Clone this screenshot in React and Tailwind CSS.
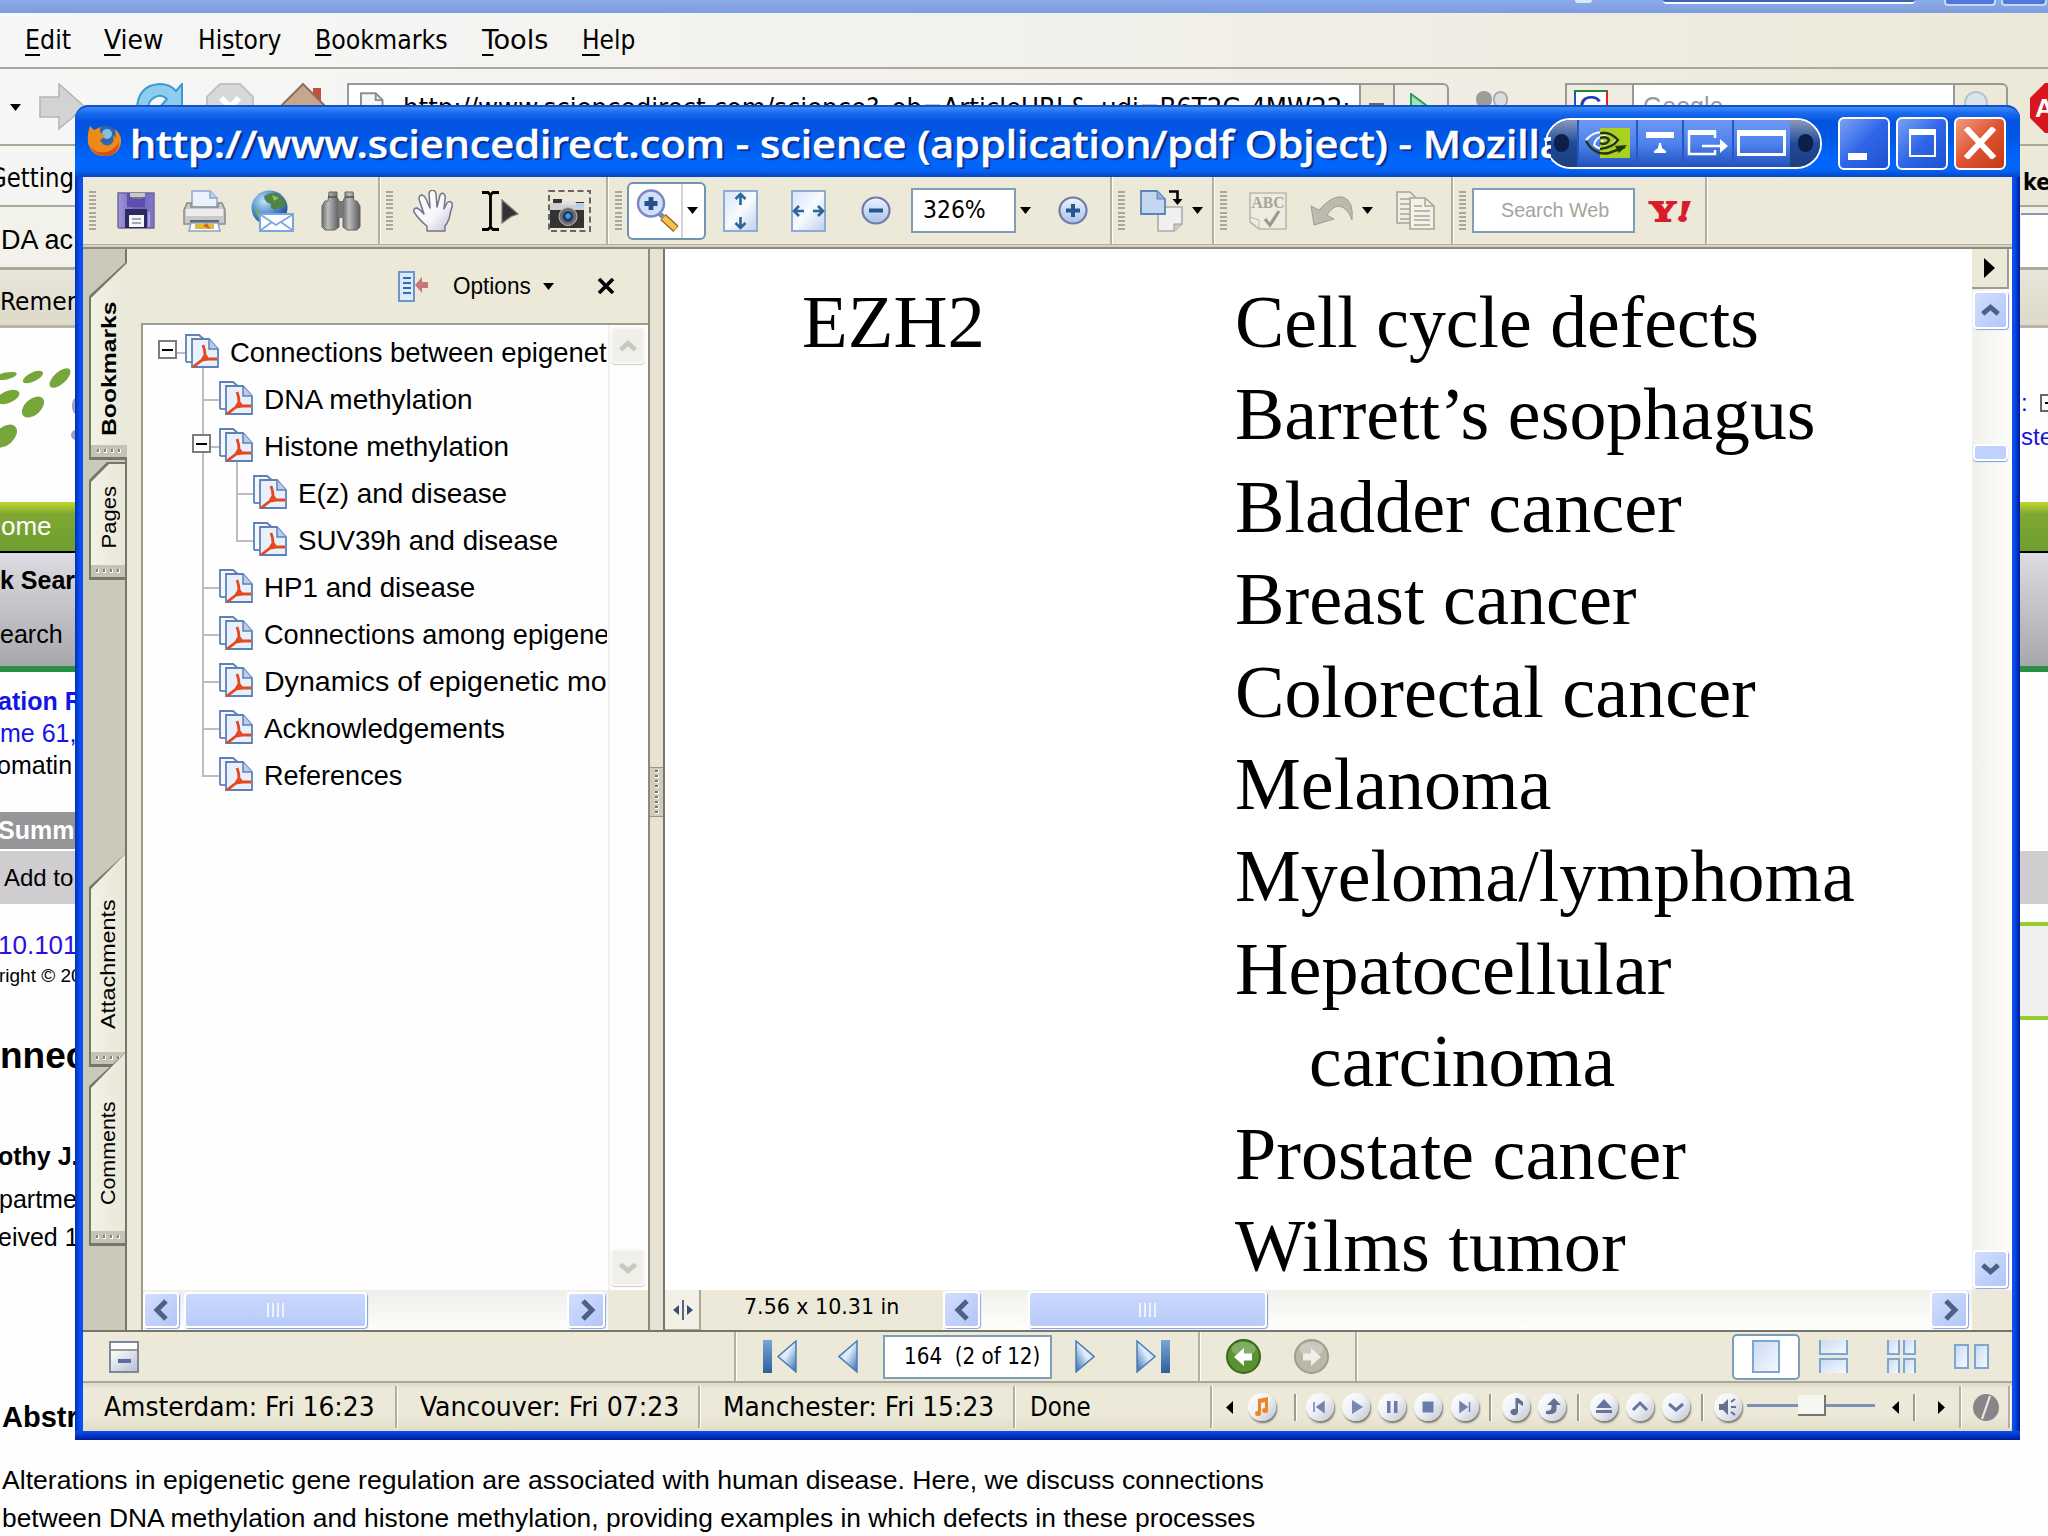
import { useLayoutEffect, useRef } from "react";

/* Text squeezed or stretched horizontally to an exact width. */
function Fit({ w, className = "", children }) {
  const ref = useRef(null);
  useLayoutEffect(() => {
    const el = ref.current;
    el.style.transform = "none";
    const n = el.offsetWidth;
    if (n) el.style.transform = `scaleX(${w / n})`;
  }, [w]);
  return (
    <span className={`block shrink-0 whitespace-pre ${className}`} style={{ width: w }}>
      <span ref={ref} className="inline-block origin-left">{children}</span>
    </span>
  );
}

const tahoma = "font-['DejaVu_Sans_Condensed','DejaVu_Sans',sans-serif]";
const arial = "font-['Liberation_Sans',sans-serif]";

const Down = ({ className = "" }) => (
  <svg className={`shrink-0 ${className}`} width="11" height="7" viewBox="0 0 11 7"><path d="M0 0H11L5.5 7Z" fill="#000" /></svg>
);

function Grip({ className = "" }) {
  return (
    <div className={`flex h-[40px] w-[7px] shrink-0 flex-col justify-between ${className}`}>
      {Array.from({ length: 10 }, (_, i) => <div key={i} className="h-[2px] bg-[#a9a796]" />)}
    </div>
  );
}
const Sep = ({ className = "" }) => <div className={`h-full w-[3px] shrink-0 border-l-[2px] border-r border-l-[#b3b09f] border-r-white ${className}`} />;

/* ---------- toolbar icons ---------- */
const Save = ({ className }) => (
  <svg className={className} width="38" height="37" viewBox="0 0 38 37">
    <defs><linearGradient id="sv" x1="0" x2="1"><stop offset="0" stopColor="#a397d6" /><stop offset=".5" stopColor="#6f60bd" /><stop offset="1" stopColor="#8377c6" /></linearGradient></defs>
    <path d="M1 1H37V36H2L1 35Z" fill="url(#sv)" stroke="#6a6599" strokeWidth="1.4" />
    <path d="M10 1H28V15H10Z" fill="#5d4fb0" /><path d="M13 1H28V5H13Z" fill="#c9c9c4" /><path d="M15 5H26V7H15Z" fill="#77758c" />
    <path d="M8 17H30V36H8Z" fill="#2d2a63" /><path d="M12 23H27V35H12Z" fill="#f6f6f8" /><path d="M15 27H24M15 31H24" stroke="#8d8c98" strokeWidth="1.5" />
    <path d="M32 20V35" stroke="#ada2e2" strokeWidth="2" />
  </svg>
);
const Print = ({ className }) => (
  <svg className={className} width="43" height="42" viewBox="0 0 43 42">
    <path d="M9 1H27L34 8V20H9Z" fill="#e9f2fd" stroke="#8ea6cd" strokeWidth="1.5" /><path d="M27 1V8H34" fill="#bcd2f0" stroke="#8ea6cd" strokeWidth="1.5" />
    <path d="M4 13H8V17H35V13H39L42 20V34H1V20Z" fill="#c9c9c9" stroke="#8b8b8b" strokeWidth="1.5" />
    <path d="M3 19H40V26H3Z" fill="#ececec" /><path d="M7 30H36V34H7Z" fill="#666" />
    <path d="M8 33H35L37 41H6Z" fill="#fff" stroke="#89a3cf" strokeWidth="1.5" /><path d="M12 34H31V39H12Z" fill="#e3b93b" /><path d="M20 36L24 33L27 39Z" fill="#c36b27" />
  </svg>
);
const GlobeMail = ({ className }) => (
  <svg className={className} width="43" height="42" viewBox="0 0 43 42">
    <defs><radialGradient id="gl" cx=".35" cy=".3" r=".75"><stop offset="0" stopColor="#c3e2fa" /><stop offset=".55" stopColor="#4d86cd" /><stop offset="1" stopColor="#1f4a92" /></radialGradient></defs>
    <ellipse cx="18.500" cy="18" rx="18" ry="17.500" fill="url(#gl)" />
    <path d="M13 6Q19 2 26 3Q33 7 35 16Q31 19 28 17Q25 21 22 19Q19 18 20 14Q13 12 13 6Z" fill="#4f8447" /><path d="M3 17Q8 19 10 24L11 31Q5 27 3 17Z" fill="#6fab74" /><path d="M21 5L28 8L23 11Z" fill="#93bd63" />
    <path d="M9 24H42V41H9Z" fill="#fafcff" stroke="#7ea5da" strokeWidth="2" /><path d="M10 25L25 35L41 25M10 40L21 32M41 40L30 32" fill="none" stroke="#7ea5da" strokeWidth="1.600" />
  </svg>
);
const Binoculars = ({ className }) => (
  <svg className={className} width="40" height="40" viewBox="0 0 40 40">
    <defs><linearGradient id="bn" x1="0" x2="1"><stop offset="0" stopColor="#6d6d6d" /><stop offset=".35" stopColor="#bcbcbc" /><stop offset="1" stopColor="#5b5b5b" /></linearGradient></defs>
    <path d="M8 1H16V6L18 10V36L14 39H4L1 36V15L4 10H7Z" fill="url(#bn)" stroke="#666" /><path d="M24 1H32L33 10H36L39 15V36L36 39H26L22 36V10L24 6Z" fill="url(#bn)" stroke="#666" />
    <path d="M17 10H23V27H17Z" fill="#777" /><path d="M7 6H16M24 6H33" stroke="#4f4f4f" strokeWidth="1.5" />
  </svg>
);
const Hand = ({ className }) => (
  <svg className={className} width="40" height="42" viewBox="0 0 40 42">
    <defs><linearGradient id="hn" x1="0" y1="0" x2="1" y2="1"><stop offset="0" stopColor="#fff" /><stop offset=".6" stopColor="#f4f4fb" /><stop offset="1" stopColor="#bcbcd6" /></linearGradient></defs>
    <path d="M14 41V36Q7 31 1 22Q0 18 4 18Q8 20 11 24L6 9Q6 5 9 5Q12 6 13 9L17 18L16 3Q17 0 20 0Q23 1 23 4L24 17L27 5Q29 2 31 4Q33 6 32 9L31 19L34 13Q37 10 39 13Q40 16 38 20L36 29Q34 34 32 36V41Z" fill="url(#hn)" stroke="#74748a" strokeWidth="1.500" strokeLinejoin="round" />
  </svg>
);
const SelectText = ({ className }) => (
  <svg className={className} width="37" height="40" viewBox="0 0 37 40">
    <path d="M0 1.500H6L8.500 4L11 1.500H17M8.500 3V37M0 38.500H6L8.500 36L11 38.500H17" fill="none" stroke="#000" strokeWidth="2.800" />
    <path d="M20 9L36 23L29 25.500L20 32Z" fill="#333" stroke="#777" strokeWidth="1.200" />
  </svg>
);
const Camera = ({ className }) => (
  <svg className={className} width="43" height="42" viewBox="0 0 43 42">
    <path d="M1 1H42V41H1Z" fill="none" stroke="#666" strokeWidth="2" strokeDasharray="6 3.500" />
    <path d="M2 13H5V9H14V12H36V38H2Z" fill="#333" /><path d="M2 13H36V20H2Z" fill="#cfcfcf" /><path d="M14 11H27L29 15H13Z" fill="#e0e0e0" />
    <circle cx="20" cy="26.500" r="9" fill="#707070" stroke="#bbb" /><circle cx="20" cy="26.500" r="5.500" fill="#1f3d70" /><circle cx="20" cy="26" r="2.500" fill="#4b9be0" /><path d="M28 14H35V17H28Z" fill="#a8d3f8" />
  </svg>
);
const Magnifier = ({ className }) => (
  <svg className={className} width="44" height="43" viewBox="0 0 44 43">
    <path d="M27 28L40 40" stroke="#8c641b" strokeWidth="8" /><path d="M27.500 28.500L39.500 39.500" stroke="#f3c34d" strokeWidth="5.500" /><path d="M21 22L27 28" stroke="#7a86b0" strokeWidth="5" />
    <circle cx="15" cy="14.500" r="13" fill="#cfe1fa" stroke="#7f86c4" strokeWidth="2.500" /><path d="M15 8V21M8.500 14.500H21.500" stroke="#27508f" strokeWidth="4.800" />
  </svg>
);
const FitPage = ({ className, wide }) => (
  <svg className={className} width="35" height="42" viewBox="0 0 35 42">
    <defs><linearGradient id="pg" x1="0" y1="0" x2="1" y2="1"><stop offset="0" stopColor="#d5e3f8" /><stop offset=".5" stopColor="#f8fbff" /><stop offset="1" stopColor="#bcd1f0" /></linearGradient></defs>
    <path d="M1 1H34V41H1Z" fill="url(#pg)" stroke="#8fabd3" strokeWidth="2" />
    {wide ? <path d="M3 21H13M22 21H32M8 16L3 21L8 26M27 16L32 21L27 26" fill="none" stroke="#2c6597" strokeWidth="2.600" />
      : <path d="M17.500 4V15M17.500 27V38M12.500 9L17.500 4L22.500 9M12.500 33L17.500 38L22.500 33" fill="none" stroke="#2c6597" strokeWidth="2.600" />}
  </svg>
);
const ZoomDot = ({ className, plus }) => (
  <svg className={className} width="30" height="29" viewBox="0 0 30 29">
    <defs><linearGradient id="zd" x1="0" y1="0" x2="0" y2="1"><stop offset="0" stopColor="#ecf4ff" /><stop offset="1" stopColor="#a6c1ea" /></linearGradient></defs>
    <ellipse cx="15" cy="14.500" rx="13.500" ry="13" fill="url(#zd)" stroke="#7379a8" strokeWidth="2.200" />
    <path d={plus ? "M8 14.500H22M15 8V21" : "M8 14.500H22"} stroke="#27568f" strokeWidth="4" />
  </svg>
);
const Rotate = ({ className }) => (
  <svg className={className} width="43" height="42" viewBox="0 0 43 42">
    <path d="M18 17H42V34L34 41H18Z" fill="#f0f0f0" stroke="#aaa" strokeWidth="1.600" /><path d="M34 41V34H42" fill="#ccc" stroke="#999" />
    <path d="M1 1H17L25 9V24H1Z" fill="#c3d7f1" stroke="#5d81b8" strokeWidth="1.800" /><path d="M17 1V9H25" fill="#8fafda" stroke="#5d81b8" />
    <path d="M29 1.500H37.500V12" fill="none" stroke="#000" strokeWidth="2.600" /><path d="M32.500 9L37.500 15L42.500 9Z" />
  </svg>
);
const Spell = ({ className }) => (
  <svg className={className} width="38" height="38" viewBox="0 0 38 38">
    <path d="M1 1H37V37H10L1 30Z" fill="#eeece0" stroke="#bcb9aa" strokeWidth="1.600" />
    <text x="2.500" y="16" textLength="33" lengthAdjust="spacingAndGlyphs" fontFamily="Liberation Serif" fontWeight="bold" fontSize="16" fill="#a8a698">ABC</text>
    <path d="M16 27L21 33L30 19" fill="none" stroke="#9b998c" strokeWidth="3.200" /><path d="M1 25L10 28V37" fill="none" stroke="#bcb9aa" />
  </svg>
);
const Undo = ({ className }) => (
  <svg className={className} width="44" height="31" viewBox="0 0 44 31">
    <path d="M1 11L9 15Q22 0 33 2Q44 6 42 25Q38 13 29 11Q23 11 17 20L24 24L4 30Z" fill="#bdbbae" stroke="#a09e90" />
  </svg>
);
const Copy = ({ className }) => (
  <svg className={className} width="39" height="39" viewBox="0 0 39 39">
    <path d="M1 1H14L19 6V32H1Z" fill="#f0eee3" stroke="#a6a497" strokeWidth="1.600" /><path d="M4 8H14M4 13H14M4 18H14M4 23H14M4 28H14" stroke="#a6a497" strokeWidth="1.500" />
    <path d="M14 7H29L38 15V38H14Z" fill="#f4f2e8" stroke="#a6a497" strokeWidth="1.600" /><path d="M29 7V15H38M18 15H26M18 20H34M18 25H34M18 29H34M18 34H34" fill="none" stroke="#a6a497" strokeWidth="1.500" />
  </svg>
);

/* ---------- scroll bar parts ---------- */
function ScrollBtn({ dir, off, className = "" }) {
  const d = { left: "M21 7L12 16L21 25", right: "M13 7L22 16L13 25", up: "M8 20L16 13L24 20", down: "M8 12L16 19L24 12" }[dir];
  return (
    <div className={`flex shrink-0 items-center justify-center rounded-[4px] border-[2px] ${off ? "border-[#f7f7f4] bg-[#f0efe9] shadow-[0_1px_1px_#ccc]" : "border-white bg-gradient-to-br from-[#d3defd] to-[#b3c6f8] shadow-[1px_1px_1px_#86a5e0]"} ${className}`}>
      <svg width="32" height="32" viewBox="0 0 32 32"><path d={d} fill="none" stroke={off ? "#c9c8c0" : "#4d6185"} strokeWidth="5" /></svg>
    </div>
  );
}
function HThumb({ className = "" }) {
  return (
    <div className={`flex shrink-0 items-center justify-center gap-[3px] rounded-[4px] border-[2px] border-white bg-gradient-to-b from-[#cbd8fe] to-[#b8cbfa] shadow-[1px_1px_1px_#7d9fe0] ${className}`}>
      {[0, 1, 2, 3].map((i) => <div key={i} className="h-[14px] w-[2px] bg-[#eef4ff]" />)}
    </div>
  );
}

/* ---------- bookmarks pane ---------- */
const PdfIcon = () => (
  <svg className="shrink-0" width="34" height="34" viewBox="0 0 34 34">
    <path d="M1 28V1H14L20 6" fill="#f4f8ff" stroke="#5f80b5" strokeWidth="1.800" /><path d="M1 28H8" stroke="#5f80b5" strokeWidth="1.800" />
    <path d="M7 5H24L33 15V33H7Z" fill="#e8f0fc" stroke="#5f80b5" strokeWidth="1.800" /><path d="M24 5V15H33" fill="#b9cdea" stroke="#5f80b5" strokeWidth="1.500" />
    <path d="M18 11Q20 16 20 21L17 26L8 33M20 21L23 25H32M17 26L23 25" fill="none" stroke="#e4481f" strokeWidth="2.800" />
  </svg>
);
const tree = [
  ["Connections between epigenet", 0, 377, true],
  ["DNA methylation", 1, 209],
  ["Histone methylation", 1, 245, true],
  ["E(z) and disease", 2, 209],
  ["SUV39h and disease", 2, 260],
  ["HP1 and disease", 1, 211],
  ["Connections among epigenetic", 1, 372],
  ["Dynamics of epigenetic modi", 1, 365],
  ["Acknowledgements", 1, 241],
  ["References", 1, 138],
];
const Guide = ({ on, stub, half }) => (
  <div className="relative h-full w-[34px] shrink-0">
    {on && <div className={`absolute left-[17px] top-0 w-[1.500px] bg-[#bdbdbd] ${half ? "h-1/2" : "h-full"}`} />}
    {stub && <div className="absolute left-[17px] top-1/2 h-[2px] w-[17px] bg-[#bdbdbd]" />}
  </div>
);
function TreeRow({ row, i }) {
  const [label, lvl, w, box] = row;
  const boxEl = (
    <div className="relative h-full w-[34px] shrink-0">
      {lvl > 0 && <div className="absolute left-[17px] top-0 h-full w-[1.500px] bg-[#bdbdbd]" />}
      <div className="absolute left-[17px] top-1/2 h-[2px] w-[17px] bg-[#bdbdbd]" />
      <div className="absolute left-[7px] top-[12px] flex h-[19px] w-[19px] items-center justify-center border-[2px] border-[#7d7d7d] bg-white"><div className="h-[2px] w-[11px] bg-black" /></div>
    </div>
  );
  return (
    <div className="flex h-[47px] items-center pl-[8px]">
      {lvl === 0 && boxEl}
      {lvl === 1 && <><div className="w-[34px] shrink-0" />{box ? boxEl : <Guide on stub half={i === 9} />}</>}
      {lvl === 2 && <><div className="w-[34px] shrink-0" /><Guide on /><Guide on stub half={i === 4} /></>}
      <div className="relative flex h-full items-center">
        {box && <div className="absolute left-[17px] top-1/2 h-1/2 w-[1.500px] bg-[#bdbdbd]" />}
        <div className="relative -mt-[2px]"><PdfIcon /></div>
      </div>
      <Fit w={w} className={`ml-[11px] pt-[3px] text-[28px] leading-[34px] ${arial}`}>{label}</Fit>
    </div>
  );
}
function SideTab({ label, w, className, slope, inner, bold }) {
  return (
    <div className={`flex w-[38px] shrink-0 bg-[#77766a] ${slope} ${className}`}>
      <div className={`ml-[2px] mt-[2px] mb-[3px] flex min-w-0 flex-1 flex-col ${inner} ${slope} bg-gradient-to-r from-[#f3f1e4] to-[#e9e7d8]`}>
        <div className="flex min-w-0 flex-1 items-center justify-center">
          <Fit w={w} className={`-rotate-90 text-[21px] leading-[24px] ${arial} ${bold ? "font-bold" : ""}`}>{label}</Fit>
        </div>
        <div className="flex h-[12px] shrink-0 items-center justify-center gap-[4px] bg-[#c5c3b4]">
          {[0, 1, 2, 3].map((i) => <div key={i} className="h-[4px] w-[3px] border-b border-r border-white bg-[#86857a]" />)}
        </div>
      </div>
    </div>
  );
}
function BookmarksPane() {
  return (
    <div className="flex w-[567px] shrink-0 border-r-[2px] border-[#8c8a7b] bg-[#ece9d8]">
      <div className="flex w-[44px] shrink-0 flex-col items-end border-r-[2px] border-[#77766a] bg-[#cbcaba]">
        <div className="-mr-[2px] flex w-[38px] flex-col">
          <SideTab label="Bookmarks" w={134} bold className="mt-[12px] h-[199px]" slope="[clip-path:polygon(0_35px,100%_0,100%_100%,0_100%)]" inner="pt-[29px]" />
          <SideTab label="Pages" w={63} className="mt-[2px] h-[118px]" slope="[clip-path:polygon(0_18px,18px_0,100%_0,100%_100%,0_100%)]" inner="pt-[4px] mr-[2px]" />
          <SideTab label="Attachments" w={130} className="mt-[272px] h-[215px]" slope="[clip-path:polygon(0_35px,100%_0,100%_100%,0_100%)]" inner="pt-[22px] mr-[2px]" />
          <SideTab label="Comments" w={104} className="-mt-[16px] h-[195px]" slope="[clip-path:polygon(0_35px,100%_0,100%_100%,0_100%)]" inner="pt-[21px] mr-[2px]" />
        </div>
      </div>
      <div className="ml-[14px] flex min-w-0 flex-1 flex-col">
        <div className="flex h-[74px] shrink-0 items-center">
          <svg className="ml-[257px]" width="31" height="31" viewBox="0 0 31 31"><path d="M1 1H16V30H1Z" fill="#dce9fa" stroke="#6e95c9" strokeWidth="2" /><path d="M5 7H13M5 12H13M5 17H13M5 22H13" stroke="#2e6ba8" strokeWidth="2" /><path d="M17 14L24 6V11H30V17H24V22Z" fill="#c9757a" /></svg>
          <Fit w={78} className={`ml-[24px] text-[24px] leading-[30px] ${arial}`}>Options</Fit>
          <Down className="ml-[12px]" />
          <svg className="ml-[43px]" width="18" height="16" viewBox="0 0 18 16"><path d="M2 1L16 15M16 1L2 15" stroke="#000" strokeWidth="3.600" /></svg>
        </div>
        <div className="flex min-h-0 flex-1 border-l-[2px] border-t-[2px] border-[#9e9c8c] bg-[#fefefe]">
          <div className="flex w-[465px] shrink-0 flex-col">
            <div className="mr-px flex flex-1 flex-col overflow-hidden pt-[3px]">{tree.map((r, i) => <TreeRow key={r[0]} row={r} i={i} />)}</div>
            <div className="flex h-[40px] shrink-0 items-center bg-gradient-to-b from-[#efeeea] to-[#fdfdfb]">
              <ScrollBtn dir="left" className="h-[36px] w-[36px]" />
              <HThumb className="ml-[5px] h-[36px] w-[183px]" />
              <div className="flex-1" />
              <ScrollBtn dir="right" className="mr-[3px] h-[36px] w-[38px]" />
            </div>
          </div>
          <div className="flex flex-1 flex-col">
            <div className="flex flex-1 flex-col items-center justify-between border-l-[2px] border-[#f0f0ee] pb-[4px] pr-[3px] pt-[2px]">
              <ScrollBtn dir="up" off className="h-[37px] w-[34px]" />
              <ScrollBtn dir="down" off className="h-[37px] w-[34px]" />
            </div>
            <div className="h-[40px] shrink-0 bg-[#ece9d8]" />
          </div>
        </div>
      </div>
    </div>
  );
}

/* ---------- document ---------- */
const lines = [
  ["Cell cycle defects", 524], ["Barrett\u2019s esophagus", 581], ["Bladder cancer", 447], ["Breast cancer", 402],
  ["Colorectal cancer", 521], ["Melanoma", 316], ["Myeloma/lymphoma", 620], ["Hepatocellular", 437],
  ["carcinoma", 306, true], ["Prostate cancer", 451], ["Wilms tumor", 391],
];
const serif = "font-['Liberation_Serif',serif] text-[74px] leading-[92.400px]";
function DocumentPane() {
  return (
    <div className="flex min-w-0 flex-1 flex-col border-l-[2px] border-[#77766a] bg-white">
      <div className="flex min-h-0 flex-1">
        <div className="flex min-w-0 flex-1 overflow-hidden pt-[27px]">
          <Fit w={183} className={`ml-[137px] h-[92px] ${serif}`}>EZH2</Fit>
          <div className="ml-[250px] flex flex-col">
            {lines.map(([t, w, ind]) => <Fit key={t} w={w} className={`h-[92.400px] ${serif} ${ind ? "ml-[74px]" : ""}`}>{t}</Fit>)}
          </div>
        </div>
        <div className="flex w-[40px] shrink-0 flex-col items-center bg-gradient-to-r from-[#f0f0ec] to-[#fdfdfb] pr-[3px]">
          <div className="flex h-[40px] w-full items-center justify-center border-b-[2px] border-r-[2px] border-[#9e9c8c] bg-[#ece9d8]"><svg width="11" height="20" viewBox="0 0 11 20"><path d="M0 0L11 10L0 20Z" /></svg></div>
          <ScrollBtn dir="up" className="mt-[2px] h-[38px] w-[35px]" />
          <div className="mt-[115px] h-[17px] w-[35px] shrink-0 rounded-[4px] border-[2px] border-white bg-[#c0d1fc] shadow-[0_1px_1px_#7d9fe0]" />
          <div className="flex-1" />
          <ScrollBtn dir="down" className="mb-[2px] h-[38px] w-[35px]" />
        </div>
      </div>
      <div className="flex h-[40px] shrink-0 items-center bg-[#ece9d8]">
        <div className="flex h-full w-[36px] items-center justify-center border-b border-r-[2px] border-[#aca899] bg-[#f3f1e6] pl-[2px]"><svg width="20" height="20" viewBox="0 0 20 20"><path d="M10 0V20" stroke="#56658a" strokeWidth="2" /><path d="M6 5V15L0 10ZM14 5V15L20 10Z" fill="#3c4d78" /></svg></div>
        <Fit w={155} className={`ml-[43px] -mt-[7px] text-[22px] leading-[30px] ${tahoma}`}>7.56 x 10.31 in</Fit>
        <div className="ml-[44px] flex h-full flex-1 items-center bg-gradient-to-b from-[#f1f1ec] to-[#fefefc] pb-px">
          <ScrollBtn dir="left" className="h-[37px] w-[37px]" />
          <HThumb className="ml-[48px] h-[37px] w-[239px]" />
          <div className="flex-1" />
          <ScrollBtn dir="right" className="mr-[4px] h-[37px] w-[38px]" />
        </div>
        <div className="w-[40px] shrink-0" />
      </div>
    </div>
  );
}

/* ---------- bars of the PDF window ---------- */
function TitleBar() {
  const dark = "flex w-[30px] items-center justify-center bg-gradient-to-b from-[#8a97b8] via-[#1d4a9a] to-[#203f7c]";
  const seg = "flex items-center justify-center border-l-[2px] border-[#2458c4] bg-gradient-to-b from-[#6e97f0] via-[#4f82ee] to-[#1f52bd]";
  const btn = "flex h-[53px] w-[52px] shrink-0 rounded-[6px] border-[2px] border-white";
  return (
    <div className="flex h-[72px] shrink-0 items-center rounded-t-[14px] border-t-[2px] border-[#1550c8] bg-[linear-gradient(180deg,#3c8cf8_0,#1a6af0_6px,#0453de_14px,#0058e6_45%,#0066fc_75%,#0564f6_90%,#0346c4_100%)] pt-[2px]">
      <svg className="ml-[12px] -mt-[4px] shrink-0" width="35" height="32" viewBox="0 0 35 32">
        <circle cx="18" cy="15" r="14" fill="#2f65ad" /><circle cx="20" cy="9" r="5" fill="#7fc0ea" />
        <path d="M3 1L7 5L14 2Q11 6 15 9Q20 10 16 13L13 15Q16 22 23 20Q28 17 26 10L29 13L28 4Q35 10 34 18Q31 31 18 31Q4 31 1 18Q0 9 3 1Z" fill="#ec8a1c" /><path d="M2 20Q8 29 19 27Q28 25 32 17Q31 31 18 31Q6 30 2 20Z" fill="#d4501b" />
      </svg>
      <div className="ml-[8px] w-[1421px] shrink-0 overflow-hidden">
        <Fit w={1434} className="font-['Noto_Sans','Open_Sans',sans-serif] text-[38px] font-medium leading-[64px] text-white [-webkit-text-stroke:0.600px_#fff] [text-shadow:2px_2px_1px_#0a2a8c]">http://www.sciencedirect.com - science (application/pdf Object) - Mozilla</Fit>
      </div>
      <div className="-ml-[6px] flex h-[51px] w-[277px] shrink-0 overflow-hidden rounded-full border-[2px] border-white">
        <div className={dark}><div className="h-[18px] w-[15px] rounded-full bg-[#0b1f48]" /></div>
        <div className={`${seg} w-[60px]`}>
          <svg width="46" height="30" viewBox="0 0 46 30"><path d="M15 0H45V30H15Z" fill="#a9d11f" /><path d="M1 12Q14 -3 32 11Q20 27 9 17Q11 8 20 8Q27 11 20 17Q15 16 18 12" fill="none" stroke="#fff" strokeWidth="2" /><path d="M1 13Q9 28 24 25L40 19M15 5Q25 3 33 12Q27 20 15 21M15 10Q22 8 24 12Q21 18 15 15" fill="none" stroke="#26360a" strokeWidth="2.500" /><path d="M30 18L42 17L34 25Z" fill="#26360a" /></svg>
        </div>
        <div className={`${seg} w-[46px]`}><svg width="28" height="22" viewBox="0 0 28 22"><path d="M0 0H28V6H0ZM13 11H15L16 16L20 19V21H8V19L12 16Z" fill="#fff" /></svg></div>
        <div className={`${seg} w-[50px]`}><svg width="42" height="26" viewBox="0 0 42 26"><path d="M28 8V2H2V24H28V20M15 16H36" fill="none" stroke="#fff" strokeWidth="2.500" /><path d="M1 0H29V5H1ZM33 9L41 16L33 23Z" fill="#fff" /></svg></div>
        <div className={`${seg} w-[59px]`}><div className="h-[26px] w-[49px] border-[3px] border-t-[6px] border-white" /></div>
        <div className={dark}><div className="h-[18px] w-[15px] rounded-full bg-[#0b1f48]" /></div>
      </div>
      <div className={`${btn} ml-[16px] items-end bg-gradient-to-br from-[#7ba0f4] via-[#2f66e8] to-[#1d51d0] pb-[8px] pl-[8px]`}><div className="h-[7px] w-[19px] bg-white" /></div>
      <div className={`${btn} ml-[6px] items-center justify-center bg-gradient-to-br from-[#7ba0f4] via-[#2f66e8] to-[#1d51d0]`}><div className="h-[28px] w-[27px] border-[2px] border-t-[6px] border-white" /></div>
      <div className={`${btn} ml-[6px] items-center justify-center bg-gradient-to-br from-[#ee9a80] via-[#dd5230] to-[#c53a14]`}><svg width="32" height="32" viewBox="0 0 32 32"><path d="M2 1L30 31M30 1L2 31" stroke="#fff" strokeWidth="6" /></svg></div>
    </div>
  );
}
function ToolBar() {
  return (
    <div className="flex h-[67px] shrink-0 items-center bg-[#ece9d8] [&>*]:shrink-0">
      <Grip className="ml-[6px]" />
      <Save className="ml-[21px]" />
      <Print className="ml-[28px]" />
      <GlobeMail className="ml-[25px]" />
      <Binoculars className="ml-[27px]" />
      <Sep className="ml-[17px]" />
      <Grip className="ml-[5px]" />
      <Hand className="ml-[20px]" />
      <SelectText className="ml-[29px]" />
      <Camera className="ml-[29px]" />
      <Sep className="ml-[15px]" />
      <Grip className="ml-[6px]" />
      <div className="ml-[5px] flex h-[58px] w-[79px] items-center rounded-[6px] border-[2px] border-[#6f93b0] bg-white">
        <Magnifier className="ml-[7px]" />
        <div className="ml-[1px] h-full w-[2px] bg-[#d5d5d0]" />
        <Down className="ml-[4px]" />
      </div>
      <FitPage className="ml-[17px]" />
      <FitPage wide className="ml-[33px]" />
      <ZoomDot className="ml-[35px]" />
      <div className="ml-[20px] flex h-[45px] w-[105px] items-center border-[2px] border-[#7f9db9] bg-white pb-[2px] pl-[10px]"><Fit w={63} className={`text-[24px] leading-[30px] ${tahoma}`}>326%</Fit></div>
      <Down className="ml-[4px]" />
      <ZoomDot plus className="ml-[27px]" />
      <Sep className="ml-[22px]" />
      <Grip className="ml-[5px]" />
      <Rotate className="ml-[15px]" />
      <Down className="ml-[9px]" />
      <Sep className="ml-[9px]" />
      <Grip className="ml-[5px]" />
      <Spell className="ml-[22px]" />
      <Undo className="ml-[23px]" />
      <Down className="ml-[8px]" />
      <Copy className="ml-[23px]" />
      <Sep className="ml-[16px]" />
      <Grip className="ml-[5px]" />
      <div className="ml-[6px] flex h-[45px] w-[163px] items-center border-[2px] border-[#7f9db9] bg-white pb-[2px] pl-[27px]"><Fit w={108} className={`text-[21px] leading-[30px] text-[#a5a39a] ${arial}`}>Search Web</Fit></div>
      <Fit w={42} className="ml-[14px] font-['Liberation_Serif',serif] text-[30px] font-bold leading-[40px] text-[#d81c2c] [-webkit-text-stroke:2px_#d81c2c]">Y<i>!</i></Fit>
      <Sep className="ml-[14px]" />
    </div>
  );
}
const NavTri = ({ className, flip, bar }) => (
  <svg className={`${className} ${flip ? "-scale-x-100" : ""}`} width={bar ? 34 : 20} height="33" viewBox={bar ? "0 0 34 33" : "14 0 20 33"}>
    <defs><linearGradient id="nt" x1="0" y1="0" x2="1" y2="1"><stop offset="0" stopColor="#a8c8ec" /><stop offset=".45" stopColor="#e2effc" /><stop offset="1" stopColor="#2f68aa" /></linearGradient><linearGradient id="nb" x1="0" y1="0" x2="0" y2="1"><stop offset="0" stopColor="#79a5d6" /><stop offset="1" stopColor="#2c619f" /></linearGradient></defs>
    {bar && <path d="M0 0H9V33H0Z" fill="url(#nb)" />}<path d="M33 1V32L15 16.500Z" fill="url(#nt)" stroke="#4a7eb8" strokeWidth="1.500" />
  </svg>
);
const RoundArrow = ({ className, back }) => (
  <svg className={`${className} ${back ? "" : "-scale-x-100"}`} width="35" height="35" viewBox="0 0 35 35">
    <circle cx="17.500" cy="17.500" r="16.500" fill={back ? "#5a9232" : "#bbb8aa"} stroke={back ? "#39691c" : "#9f9d90"} strokeWidth="2" /><ellipse cx="17.500" cy="10" rx="12" ry="7" fill="#fff" opacity=".25" />
    <path d="M8 18L18 9V14.500H26V21.500H18V27Z" fill={back ? "#fff" : "#efeee8"} />
  </svg>
);
const Cell = ({ className }) => <div className={`border-[2px] border-[#7fa5d2] bg-gradient-to-br from-[#c9dcf3] to-[#f5f9ff] ${className}`} />;
function NavBar() {
  return (
    <div className="flex h-[53px] shrink-0 items-center border-b-[2px] border-t-[2px] border-b-[#aca899] border-t-[#77766a] bg-[#ece9d8] [&>*]:shrink-0">
      <div className="ml-[26px] flex h-[32px] w-[30px] flex-col border-[2px] border-[#7d86a0] bg-white"><div className="h-[8px] border-b-[2px] border-[#9a9a9a]" /><div className="flex flex-1 items-center justify-center bg-gradient-to-br from-white to-[#b9bfd0]"><div className="h-[4px] w-[13px] bg-[#5a6ba8]" /></div></div>
      <Sep className="ml-[595px]" />
      <NavTri bar className="ml-[26px]" />
      <NavTri className="ml-[41px]" />
      <div className="ml-[25px] flex h-[44px] w-[169px] items-center border-[2px] border-[#7f9db9] bg-white pb-[2px] pl-[19px]"><Fit w={136} className={`text-[23px] leading-[30px] ${tahoma}`}>164  (2 of 12)</Fit></div>
      <NavTri flip className="ml-[23px]" />
      <NavTri flip bar className="ml-[41px]" />
      <Sep className="ml-[28px]" />
      <RoundArrow back className="ml-[25px]" />
      <RoundArrow className="ml-[33px]" />
      <Sep className="ml-[26px]" />
      <div className="ml-[374px] flex h-[46px] w-[68px] items-center justify-center rounded-[5px] border-[2px] border-[#7a9db8] bg-white"><Cell className="h-[33px] w-[28px] border-[#5d8bc0]" /></div>
      <div className="ml-[19px] flex h-[33px] w-[29px] flex-col justify-between"><Cell className="h-[15px] border-t-0" /><Cell className="h-[15px] border-b-0" /></div>
      <div className="ml-[39px] grid h-[33px] w-[29px] grid-cols-2 gap-[3px]"><Cell className="border-t-0" /><Cell className="border-t-0" /><Cell className="border-b-0" /><Cell className="border-b-0" /></div>
      <div className="ml-[38px] flex h-[25px] w-[35px] gap-[5px]"><Cell className="flex-1" /><Cell className="flex-1" /></div>
    </div>
  );
}
const glyph = {
  prev: <path d="M8 9V19M18 9V19L11 14Z" fill="#7683a8" stroke="#7683a8" strokeWidth="1.500" />,
  play: <path d="M10 7L21 14L10 21Z" fill="#7888b5" />,
  pause: <path d="M9 8H12.500V20H9ZM16 8H19.500V20H16Z" fill="#6b7cac" />,
  stop: <path d="M8.500 8.500H19.500V19.500H8.500Z" fill="#6b7cac" />,
  next: <path d="M9 9V19L16 14ZM18.500 9V19" fill="#7683a8" stroke="#7683a8" strokeWidth="1.500" />,
  note: <path d="M13.500 5H16L21 9V13L16 10V19A3.800 3.200 0 1 1 13.500 16Z" fill="#65708f" />,
  up: <path d="M16 5L23 12H18.500V17Q18 22 8 21V18Q13 18 13.500 15V12H9Z" fill="#65708f" />,
  eject: <path d="M14 6L22 15H6ZM6 17H22V20H6Z" fill="#65749f" />,
  chevUp: <path d="M7 17L14 10L21 17" fill="none" stroke="#65749f" strokeWidth="3" />,
  chevDown: <path d="M7 11L14 17L21 11" fill="none" stroke="#65749f" strokeWidth="3" />,
  speaker: <><path d="M5 11H9L14 6V22L9 17H5Z" fill="#65708f" /><path d="M17 9L21 6M17 14H22M17 19L21 22" stroke="#65708f" strokeWidth="2" /></>,
  music: <path d="M10 6L20 4V17A3 2.500 0 1 1 17 15V9L13 10V20A3 2.500 0 1 1 10 18Z" fill="#ee8527" />,
};
const Round = ({ g, className = "" }) => (
  <div className={`h-[28px] w-[28px] shrink-0 rounded-full bg-gradient-to-br from-white via-[#eef0f6] to-[#bfc3d0] shadow-[1px_2px_2px_#77776f] ${className}`}><svg width="28" height="28" viewBox="0 0 28 28">{glyph[g]}</svg></div>
);
const MiniSep = ({ className = "" }) => <div className={`h-[27px] w-[3px] shrink-0 border-l-[2px] border-r border-l-[#9d9b8c] border-r-white ${className}`} />;
const Tri = ({ flip, className = "" }) => <svg className={`shrink-0 ${flip ? "-scale-x-100" : ""} ${className}`} width="7" height="13" viewBox="0 0 7 13"><path d="M7 0V13L0 6.500Z" /></svg>;
function StatusBar() {
  const t = `text-[26px] leading-[40px] ${tahoma}`;
  return (
    <div className="flex min-h-0 flex-1 items-center bg-[linear-gradient(180deg,#dddac8_0,#ece9d8_6px,#ece9d8_70%,#e2dcc6_100%)] [&>*]:shrink-0">
      <Fit w={270} className={`ml-[21px] ${t}`}>Amsterdam: Fri 16:23</Fit>
      <Sep className="ml-[21px] !h-[42px]" />
      <Fit w={259} className={`ml-[22px] ${t}`}>Vancouver: Fri 07:23</Fit>
      <Sep className="ml-[19px] !h-[42px]" />
      <Fit w={271} className={`ml-[22px] ${t}`}>Manchester: Fri 15:23</Fit>
      <Sep className="ml-[19px] !h-[42px]" />
      <Fit w={61} className={`ml-[14px] ${t}`}>Done</Fit>
      <Sep className="ml-[119px] !h-[42px]" />
      <Tri className="ml-[13px]" />
      <Round g="music" className="ml-[15px]" />
      <MiniSep className="ml-[18px]" />
      <Round g="prev" className="ml-[9px]" />
      <Round g="play" className="ml-[8px]" />
      <Round g="pause" className="ml-[8px]" />
      <Round g="stop" className="ml-[8px]" />
      <Round g="next" className="ml-[9px]" />
      <MiniSep className="ml-[10px]" />
      <Round g="note" className="ml-[10px]" />
      <Round g="up" className="ml-[8px]" />
      <MiniSep className="ml-[11px]" />
      <Round g="eject" className="ml-[10px]" />
      <Round g="chevUp" className="ml-[8px]" />
      <Round g="chevDown" className="ml-[8px]" />
      <MiniSep className="ml-[11px]" />
      <Round g="speaker" className="ml-[10px]" />
      <div className="ml-[5px] -mt-[3px] flex w-[128px] items-center">
        <div className="h-[3px] w-[51px] bg-[#7f90b8]" />
        <div className="h-[21px] w-[28px] border-b-[2px] border-r-[2px] border-[#77766a] bg-[#f6f6f2]" />
        <div className="h-[3px] flex-1 bg-[#7f90b8]" />
      </div>
      <Tri className="ml-[17px]" />
      <MiniSep className="ml-[14px]" />
      <Tri flip className="ml-[22px]" />
      <Sep className="ml-[14px] !h-[42px]" />
      <svg className="ml-[11px]" width="26" height="27" viewBox="0 0 26 27"><ellipse cx="13" cy="13.500" rx="13" ry="13.500" fill="#85858a" /><path d="M17 2L9 25" stroke="#ece9d8" strokeWidth="2.200" /></svg>
      <Sep className="ml-[9px] !h-[42px]" />
    </div>
  );
}

/* ---------- browser window behind ---------- */
function MenuItem({ pre = "", k, rest, w, className }) {
  return <Fit w={w} className={`text-[27px] leading-[34px] ${className} ${tahoma}`}>{pre}<span className="underline decoration-[2px] underline-offset-[5px]">{k}</span>{rest}</Fit>;
}
function Browser() {
  const txt = `whitespace-pre ${arial}`;
  return (
    <div className="flex h-[1536px] w-[2048px] flex-col overflow-hidden bg-[#fefefe] [&>*]:shrink-0">
      <div className="flex h-[13px] items-start bg-gradient-to-b from-[#8cabea] to-[#7f9cdc]">
        <div className="ml-[1575px] h-[3px] w-[17px] rounded-b-full bg-[#d4e9fb]" />
        <div className="ml-[71px] h-[4px] w-[252px] rounded-b-[4px] border-b-[2px] border-white bg-[#3e62b4]" />
        <div className="ml-[29px] h-[6px] w-[52px] rounded-b-[4px] border-x-[2px] border-b-[2px] border-[#c9d8f8] bg-[#4f78dc]" />
        <div className="ml-[5px] h-[6px] w-[46px] rounded-b-[4px] border-x-[2px] border-b-[2px] border-[#c9d8f8] bg-[#4f78dc]" />
      </div>
      <div className="flex h-[56px] border-b-[2px] border-[#aca899] bg-gradient-to-r from-[#f7f7f7] via-[#f2f1ec] to-[#ece9d8] pt-[10px] [&>*]:shrink-0">
        <MenuItem k="E" rest="dit" w={46} className="ml-[25px]" />
        <MenuItem k="V" rest="iew" w={60} className="ml-[33px]" />
        <MenuItem pre="Hi" k="s" rest="tory" w={83} className="ml-[34px]" />
        <MenuItem k="B" rest="ookmarks" w={133} className="ml-[34px]" />
        <MenuItem k="T" rest="ools" w={66} className="ml-[34px]" />
        <MenuItem k="H" rest="elp" w={53} className="ml-[34px]" />
      </div>
      <div className="flex h-[77px] items-start border-b-[2px] border-[#aca899] bg-gradient-to-r from-[#f7f7f7] via-[#f2f1ec] to-[#ece9d8] pt-[14px] [&>*]:shrink-0">
        <Down className="ml-[10px] mt-[21px]" />
        <svg className="ml-[18px]" width="48" height="48" viewBox="0 0 48 48"><path d="M1 14H20V1L46 24L20 46V34H1Z" fill="#d3d3d3" stroke="#b5b5b5" strokeWidth="1.500" /></svg>
        <svg className="ml-[48px]" width="49" height="47" viewBox="0 0 49 47"><path d="M2 30Q1 2 25 1Q35 1 41 8L47 1V24H25L32 16Q25 9 16 17Q12 22 13 32Z" fill="#8fcdf0" stroke="#3b9ad0" strokeWidth="2" /></svg>
        <svg className="ml-[22px]" width="48" height="47" viewBox="0 0 48 47"><path d="M14 1H34L47 14V33L34 46H14L1 33V14Z" fill="#d8d8d8" stroke="#c2c2c2" strokeWidth="2" /><path d="M15 15L33 33M33 15L15 33" stroke="#fff" strokeWidth="6" /></svg>
        <svg className="ml-[25px]" width="49" height="47" viewBox="0 0 49 47"><path d="M34 5H42V20H34Z" fill="#c2513c" /><path d="M1 24L24 1L47 24V30H1Z" fill="#c7a68e" stroke="#8f6f5b" strokeWidth="2" /></svg>
        <div className="ml-[19px] flex h-[50px] w-[1048px] items-start border-[2px] border-[#999] bg-white">
          <svg className="ml-[11px] mt-[7px]" width="24" height="30" viewBox="0 0 24 30"><path d="M1 1H16L23 8V29H1Z" fill="#f6f6f6" stroke="#8e8e8e" strokeWidth="2" /><path d="M16 1V8H23" fill="none" stroke="#8e8e8e" strokeWidth="2" /></svg>
          <Fit w={948} className={`ml-[19px] mt-[5px] text-[27px] leading-[36px] ${tahoma}`}>http://www.sciencedirect.com/science?_ob=ArticleURL&amp;_udi=B6T2G-4MW22:</Fit>
          <div className="ml-[8px] h-full w-[35px] border-l-[2px] border-[#999] bg-[#ece9d8] pl-[8px] pt-[18px]"><div className="h-[6px] w-[15px] bg-[#666]" /></div>
        </div>
        <div className="flex h-[50px] w-[54px] justify-center rounded-tr-[6px] border-r-[2px] border-t-[2px] border-[#999] pt-[8px]"><svg width="22" height="30" viewBox="0 0 22 30"><path d="M1 1L20 15L1 29Z" fill="#a5e0bd" stroke="#24a05a" strokeWidth="2" /></svg></div>
        <div className="ml-[27px] mt-[8px] flex gap-[1px]"><div className="h-[17px] w-[16px] rounded-full bg-[#9c9c98]" /><div className="h-[17px] w-[15px] rounded-full border-[2px] border-[#aaa] bg-[#ddd]" /></div>
        <div className="ml-[57px] flex h-[50px] w-[443px] rounded-tr-[6px] border-[2px] border-[#999]">
          <div className="flex w-[67px] items-start border-r-[2px] border-[#999] pl-[7px] pt-[5px]"><div className="h-[34px] w-[34px] border-[2px] border-b-[#25a] border-l-[#25b] border-r-[#d22] border-t-[#1a8a30] bg-white text-center font-['Liberation_Sans',sans-serif] text-[32px] leading-[31px] text-[#1d3fb4]">G</div></div>
          <Fit w={80} className={`bg-white pl-[9px] pt-[4px] text-[28px] leading-[36px] text-[#999] ${arial}`}>Google</Fit>
          <div className="w-[241px] border-r-[2px] border-[#999] bg-white" />
          <div className="pl-[9px] pt-[6px]"><div className="h-[24px] w-[24px] rounded-full border-[2px] border-[#b8c4cc] bg-[#d9e6ec]" /></div>
        </div>
        <div className="ml-[22px] flex h-[50px] w-[50px] items-center bg-[#d8141c] pl-[5px] font-['Liberation_Sans',sans-serif] text-[26px] font-bold leading-[50px] text-white [clip-path:polygon(30%_0,70%_0,100%_30%,100%_70%,70%_100%,30%_100%,0_70%,0_30%)]">ABP</div>
      </div>
      <div className="flex h-[61px] items-center justify-between border-b-[2px] border-[#aca899] bg-gradient-to-r from-[#f5f5f3] to-[#ece9d8]">
        <Fit w={85} className={`-ml-[11px] pt-[4px] text-[26px] leading-[34px] ${tahoma}`}>Getting</Fit>
        <div className={`w-[25px] overflow-hidden pt-[13px] text-[23px] font-bold leading-[34px] ${tahoma}`}>ke</div>
      </div>
      <div className="flex h-[63px] items-center justify-between border-b-[3px] border-[#aca899] bg-[#f2f1ea]">
        <div className={`ml-px ${txt} pt-[5px] text-[27px] leading-[34px]`}>DA ac</div>
        <div className="mt-[6px] h-[54px] w-[27px] border-t-[2px] border-[#8a97b0] bg-white" />
      </div>
      <div className="flex h-[58px] items-center border-b-[3px] border-[#b8b5a5] bg-gradient-to-b from-[#e8e5da] to-[#dedac9] pt-[9px]"><Fit w={90} className={`text-[24px] leading-[34px] ${tahoma}`}>Remem</Fit></div>
      <div className="flex h-[174px] justify-between">
        <svg width="75" height="173" viewBox="0 0 75 173">
          <g fill="#76a53a"><ellipse cx="6" cy="48" rx="11" ry="3.500" transform="rotate(-12 6 48)" /><ellipse cx="33" cy="49" rx="11" ry="4.500" transform="rotate(-25 33 49)" /><ellipse cx="60" cy="50" rx="13" ry="6" transform="rotate(-42 60 50)" /><ellipse cx="8" cy="69" rx="12" ry="6" transform="rotate(-22 8 69)" /><ellipse cx="33" cy="79" rx="13" ry="8" transform="rotate(-42 33 79)" /><ellipse cx="5" cy="108" rx="14" ry="9" transform="rotate(-42 5 108)" /></g>
          <g fill="#9da3bb"><ellipse cx="76" cy="78" rx="4" ry="8" /><ellipse cx="76" cy="107" rx="5" ry="5" /></g>
        </svg>
        <div className="w-[27px] overflow-hidden pt-[58px]">
          <div className={`flex items-center gap-[12px] text-[24px] leading-[34px] text-[#1414e0] ${arial}`}><span>:</span><div className="flex h-[18px] w-[18px] shrink-0 items-center border-[2px] border-[#666]"><div className="ml-[3px] h-[2px] w-[8px] bg-black" /></div></div>
          <div className={`text-[24px] leading-[34px] text-[#1414e0] ${arial}`}>stem</div>
        </div>
      </div>
      <div className={`flex h-[51px] items-center border-b-[2px] border-black bg-[linear-gradient(180deg,#c3d62e_0,#7fa832_12px,#6d9e30_100%)] pl-[1px] text-[26px] text-white ${arial}`}>ome</div>
      <div className={`flex h-[119px] flex-col justify-between border-b-[6px] border-[#2a9044] bg-gradient-to-b from-[#dcdce2] to-[#a8a8ac] pb-[15px] pt-[10px] text-[25px] leading-[34px] [&>*]:whitespace-pre ${arial}`}><b>k Search</b><span>earch</span></div>
      <div className={`flex h-[140px] flex-col pt-[13px] text-[25px] leading-[32px] ${arial}`}><b className="-ml-[2px] text-[#1414e8]">ation Re</b><span className="text-[#1414e8]">me 61,</span><span className="-ml-[3px]">omatin</span></div>
      <div className={`flex h-[39px] w-[640px] items-center border-b-[2px] border-white bg-[#989598] text-[25px] font-bold text-white ${arial}`}><span className="-ml-[2px]">Summary</span></div>
      <div className={`flex h-[53px] items-center bg-[#d0cdd0] pl-[4px] text-[24px] ${arial}`}>Add to</div>
      <div className="flex h-[170px] justify-between">
        <div className={`pt-[24px] ${txt}`}><div className="-ml-[2px] text-[26px] leading-[34px] text-[#2a10e0]">10.101</div><div className="-ml-[1px] text-[19px] leading-[28px]">right © 20</div></div>
        <div className="mt-[18px] h-[98px] w-[30px] border-y-[4px] border-[#98cc2c] bg-[#efefef]" />
      </div>
      <div className={`-mt-[40px] flex h-[330px] flex-col ${txt}`}>
        <b className="text-[37px] leading-[44px]">nnec</b>
        <b className="-ml-[2px] mt-[59px] text-[25px] leading-[38px]">othy J.</b>
        <span className="-ml-[1px] mt-[5px] text-[25px] leading-[38px]">partme</span>
        <span className="-ml-[2px] text-[25px] leading-[38px]">eived 1</span>
      </div>
      <div className={`flex flex-col pl-[2px] pt-[34px] ${txt}`}>
        <b className="text-[29px] leading-[38px]">Abstract</b>
        <Fit w={1262} className="mt-[25px] text-[25px] leading-[38px]">Alterations in epigenetic gene regulation are associated with human disease. Here, we discuss connections</Fit>
        <Fit w={1253} className="text-[25px] leading-[38px]">between DNA methylation and histone methylation, providing examples in which defects in these processes</Fit>
      </div>
    </div>
  );
}

export default function App() {
  return (
    <div className="relative h-[1536px] w-[2048px] overflow-hidden text-black">
      <Browser />
      <div className="absolute left-[75px] top-[105px] flex h-[1335px] w-[1945px] flex-col rounded-t-[14px] bg-[linear-gradient(90deg,#0030b8_0,#0a50f0_5px,#0a50f0_1939px,#001aa0_1945px)]">
        <TitleBar />
        <div className="mx-[8px] flex min-h-0 flex-1 flex-col bg-[#ece9d8]">
          <ToolBar />
          <div className="h-[5px] shrink-0 border-b-[2px] border-t border-b-[#8c8a7b] border-t-[#b3b09f] bg-[#d6d3c1]" />
          <div className="flex h-[1081px] shrink-0">
            <BookmarksPane />
            <div className="flex w-[13px] shrink-0 flex-col items-center bg-[#e6e3d4] pt-[518px]">
              <div className="flex h-[50px] w-full flex-col items-center justify-between border-y border-[#999787] bg-[#cfccbc] py-[2px]">{Array.from({ length: 9 }, (_, i) => <div key={i} className="h-[3px] w-[4px] border-b border-r border-white bg-[#77766a]" />)}</div>
            </div>
            <DocumentPane />
          </div>
          <NavBar />
          <StatusBar />
        </div>
        <div className="h-[9px] shrink-0 bg-gradient-to-b from-[#0a50f0] to-[#001a98]" />
      </div>
    </div>
  );
}
